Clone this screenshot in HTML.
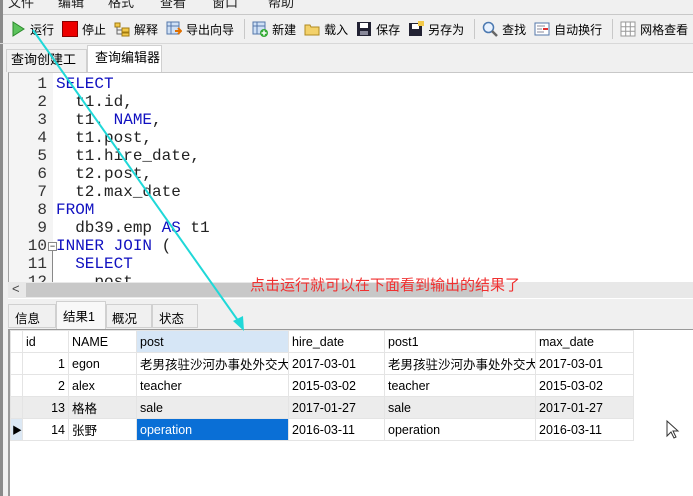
<!DOCTYPE html>
<html><head><meta charset="utf-8">
<style>
*{margin:0;padding:0;box-sizing:border-box}
body{width:693px;height:496px;overflow:hidden;background:#f0f0f0;position:relative;font-family:"Liberation Sans","Noto Sans CJK SC",sans-serif;font-size:12px;color:#000}
.abs{position:absolute}
.menu span{position:absolute;top:-8px;font-size:13px;color:#222}
.tb{position:absolute;top:15px;height:28px;display:flex;align-items:center;font-size:12px}
.tb .it{display:flex;align-items:center;margin-right:8px;white-space:nowrap}
.ico{width:16px;height:16px;margin-right:4px;display:inline-block;position:relative}
.sep{width:1px;height:20px;background:#c8c8c8;margin:0 7px 0 2px}
.code{position:absolute;left:8px;top:72px;width:685px;height:210px;background:#fff;border-left:1px solid #a0a0a0;border-top:1px solid #c8c8c8;font-family:"Liberation Mono",monospace;font-size:16px;overflow:hidden}
.gut{position:absolute;left:0;top:0;width:44px;height:210px;background:#f4f4f4}
.ln{position:absolute;left:0;width:38px;text-align:right;color:#333;line-height:18px}
.cl{position:absolute;left:47px;white-space:pre;color:#222;line-height:18px}
.kw{color:#1010c0}
table{border-collapse:collapse;position:absolute;left:10px;top:330px;font-size:12.5px;table-layout:fixed;width:623px}
td{height:22px;border:1px solid #e4e4e4;padding:0 3px;white-space:nowrap;overflow:hidden}
</style></head><body>
<div class="menu"><span style="left:8px">文件</span><span style="left:58px">编辑</span><span style="left:108px">格式</span><span style="left:160px">查看</span><span style="left:212px">窗口</span><span style="left:268px">帮助</span></div>
<div class="abs" style="left:0;top:14px;width:693px;height:1px;background:#c8c8c8"></div>
<div class="abs" style="left:0;top:0;width:3px;height:496px;background:#8a8a8a"></div>
<div class="tb" style="left:10px">
 <div class="it"><svg class="ico" viewBox="0 0 16 16"><path d="M3 1 L14 8 L3 15 Z" fill="#5cc35c" stroke="#2a8a2a"/></svg>运行</div>
 <div class="it"><span class="ico" style="background:#e00;border:1px solid #800"></span>停止</div>
 <div class="it"><svg class="ico" viewBox="0 0 16 16"><rect x="1" y="2" width="5" height="4" fill="#f3c94a" stroke="#a07a10"/><rect x="8" y="7" width="7" height="4" fill="#f3c94a" stroke="#a07a10"/><rect x="8" y="12" width="7" height="3" fill="#f3c94a" stroke="#a07a10"/><path d="M3 6v7h5M3 9h5" stroke="#666" fill="none"/></svg>解释</div>
 <div class="it"><svg class="ico" viewBox="0 0 16 16"><rect x="1" y="1" width="12" height="12" fill="#cfe0f5" stroke="#5577aa"/><path d="M1 5h12M5 1v12" stroke="#5577aa"/><path d="M9 10h6M12 7l3 3-3 3" stroke="#e07000" stroke-width="2" fill="none"/></svg>导出向导</div>
 <div class="sep"></div>
 <div class="it"><svg class="ico" viewBox="0 0 16 16"><rect x="1" y="1" width="12" height="12" fill="#cfe0f5" stroke="#5577aa"/><path d="M1 5h12M5 1v12" stroke="#5577aa"/><circle cx="12" cy="12" r="4" fill="#3a3"/><path d="M12 9.5v5M9.5 12h5" stroke="#fff" stroke-width="1.5"/></svg>新建</div>
 <div class="it"><svg class="ico" viewBox="0 0 16 16"><path d="M1 4h5l1 2h8v8H1z" fill="#f3d16a" stroke="#b08a20"/></svg>载入</div>
 <div class="it"><svg class="ico" viewBox="0 0 16 16"><rect x="1" y="1" width="14" height="14" fill="#223"/><rect x="4" y="2" width="8" height="5" fill="#fff"/><rect x="4" y="10" width="8" height="4" fill="#889"/></svg>保存</div>
 <div class="it"><svg class="ico" viewBox="0 0 16 16"><rect x="1" y="2" width="13" height="13" fill="#223"/><rect x="4" y="3" width="7" height="5" fill="#fff"/><rect x="10" y="0" width="6" height="5" fill="#f3c94a"/></svg>另存为</div>
 <div class="sep"></div>
 <div class="it"><svg class="ico" viewBox="0 0 16 16"><circle cx="6.5" cy="6.5" r="5" fill="#e8f2ff" stroke="#4a78b0" stroke-width="1.5"/><path d="M10 10l5 5" stroke="#666" stroke-width="2.5"/></svg>查找</div>
 <div class="it"><svg class="ico" viewBox="0 0 16 16"><rect x="1" y="2" width="14" height="12" fill="#fff" stroke="#5577aa"/><path d="M3 5h8M3 8h5M3 11h7" stroke="#889"/><path d="M9 8h5" stroke="#e03030" stroke-width="2"/></svg>自动换行</div>
 <div class="sep"></div>
 <div class="it"><svg class="ico" viewBox="0 0 16 16"><rect x="1" y="1" width="14" height="14" fill="#fff" stroke="#999"/><path d="M1 5.7h14M1 10.3h14M5.7 1v14M10.3 1v14" stroke="#999"/></svg>网格查看</div>
</div>
<div class="abs" style="left:0;top:43px;width:693px;height:1px;background:#d8d8d8"></div>
<div class="abs" style="left:6px;top:49px;width:81px;height:23px;border:1px solid #d0d0d0;border-bottom:none;font-size:13px;line-height:20px;padding:0 0 0 4px;background:#f0f0f0">查询创建工具</div>
<div class="abs" style="left:87px;top:45px;width:75px;height:28px;border:1px solid #d0d0d0;border-bottom:none;font-size:13px;line-height:24px;padding:0 0 0 7px;background:#fff">查询编辑器</div>
<div class="code">
 <div class="gut"></div>
 <div class="ln" style="top:2px">1</div><div class="cl kw" style="top:2px">SELECT</div>
 <div class="ln" style="top:20px">2</div><div class="cl" style="top:20px">  t1.id,</div>
 <div class="ln" style="top:38px">3</div><div class="cl" style="top:38px">  t1. <span class="kw">NAME</span>,</div>
 <div class="ln" style="top:56px">4</div><div class="cl" style="top:56px">  t1.post,</div>
 <div class="ln" style="top:74px">5</div><div class="cl" style="top:74px">  t1.hire_date,</div>
 <div class="ln" style="top:92px">6</div><div class="cl" style="top:92px">  t2.post,</div>
 <div class="ln" style="top:110px">7</div><div class="cl" style="top:110px">  t2.max_date</div>
 <div class="ln" style="top:128px">8</div><div class="cl kw" style="top:128px">FROM</div>
 <div class="ln" style="top:146px">9</div><div class="cl" style="top:146px">  db39.emp <span class="kw">AS</span> t1</div>
 <div class="ln" style="top:164px">10</div><div class="cl kw" style="top:164px">INNER JOIN <span style="color:#222">(</span></div>
 <div class="abs" style="left:39px;top:169px;width:9px;height:9px;border:1px solid #888;background:#fff;font-size:9px;line-height:7px;text-align:center;font-family:'Liberation Sans'">−</div>
 <div class="abs" style="left:43px;top:178px;width:1px;height:32px;background:#888"></div>
 <div class="ln" style="top:182px">11</div><div class="cl kw" style="top:182px">  SELECT</div>
 <div class="ln" style="top:200px">12</div><div class="cl" style="top:200px">    post</div>
</div>
<div class="abs" style="left:8px;top:282px;width:685px;height:16px;background:#e8e8e8"></div>
<div class="abs" style="left:26px;top:283px;width:457px;height:14px;background:#c8c8c8"></div>
<div class="abs" style="left:12px;top:281px;font-size:13px;color:#444">&lt;</div>
<div class="abs" style="left:8px;top:298px;width:685px;height:1px;background:#fff"></div>
<div class="abs" style="left:8px;top:304px;width:48px;height:24px;border:1px solid #d0d0d0;font-size:12.5px;padding:3px 0 0 6px">信息</div>
<div class="abs" style="left:56px;top:301px;width:50px;height:28px;border:1px solid #d0d0d0;border-bottom:none;background:#f8f8f8;font-size:12.5px;padding:4px 0 0 6px">结果1</div>
<div class="abs" style="left:106px;top:304px;width:46px;height:24px;border:1px solid #d0d0d0;font-size:12.5px;padding:3px 0 0 5px">概况</div>
<div class="abs" style="left:152px;top:304px;width:46px;height:24px;border:1px solid #d0d0d0;font-size:12.5px;padding:3px 0 0 6px">状态</div>
<div class="abs" style="left:8px;top:329px;width:685px;height:167px;background:#fff;border-top:1px solid #999;border-left:2px solid #9a9a9a"></div>
<table>
<colgroup><col style="width:12px"><col style="width:46px"><col style="width:68px"><col style="width:152px"><col style="width:96px"><col style="width:151px"><col style="width:98px"></colgroup>
<tr style="background:#fff"><td></td><td>id</td><td>NAME</td><td style="background:#d6e6f6">post</td><td>hire_date</td><td>post1</td><td>max_date</td></tr>
<tr><td></td><td style="text-align:right">1</td><td>egon</td><td>老男孩驻沙河办事处外交大使</td><td>2017-03-01</td><td>老男孩驻沙河办事处外交大使</td><td>2017-03-01</td></tr>
<tr><td></td><td style="text-align:right">2</td><td>alex</td><td>teacher</td><td>2015-03-02</td><td>teacher</td><td>2015-03-02</td></tr>
<tr style="background:#ececec"><td></td><td style="text-align:right">13</td><td>格格</td><td>sale</td><td>2017-01-27</td><td>sale</td><td>2017-01-27</td></tr>
<tr><td style="background:#dce8f4;font-size:10px;padding:0 1px">▶</td><td style="text-align:right">14</td><td>张野</td><td style="background:#0a6fd6;color:#fff">operation</td><td>2016-03-11</td><td>operation</td><td>2016-03-11</td></tr>
</table>
<div class="abs" style="left:250px;top:274px;color:#f03030;font-size:15px;font-family:'Noto Sans CJK SC',sans-serif">点击运行就可以在下面看到输出的结果了</div>
<svg class="abs" style="left:0;top:0" width="693" height="496"><line x1="33" y1="30" x2="239" y2="322" stroke="#20d8d8" stroke-width="2"/><path d="M244 331 L233 321 L243 316 Z" fill="#20d8d8"/><path d="M667 421 v15 l4-4 3 6 2-1-3-6 5 0 z" fill="#fff" stroke="#333"/></svg>
</body></html>
